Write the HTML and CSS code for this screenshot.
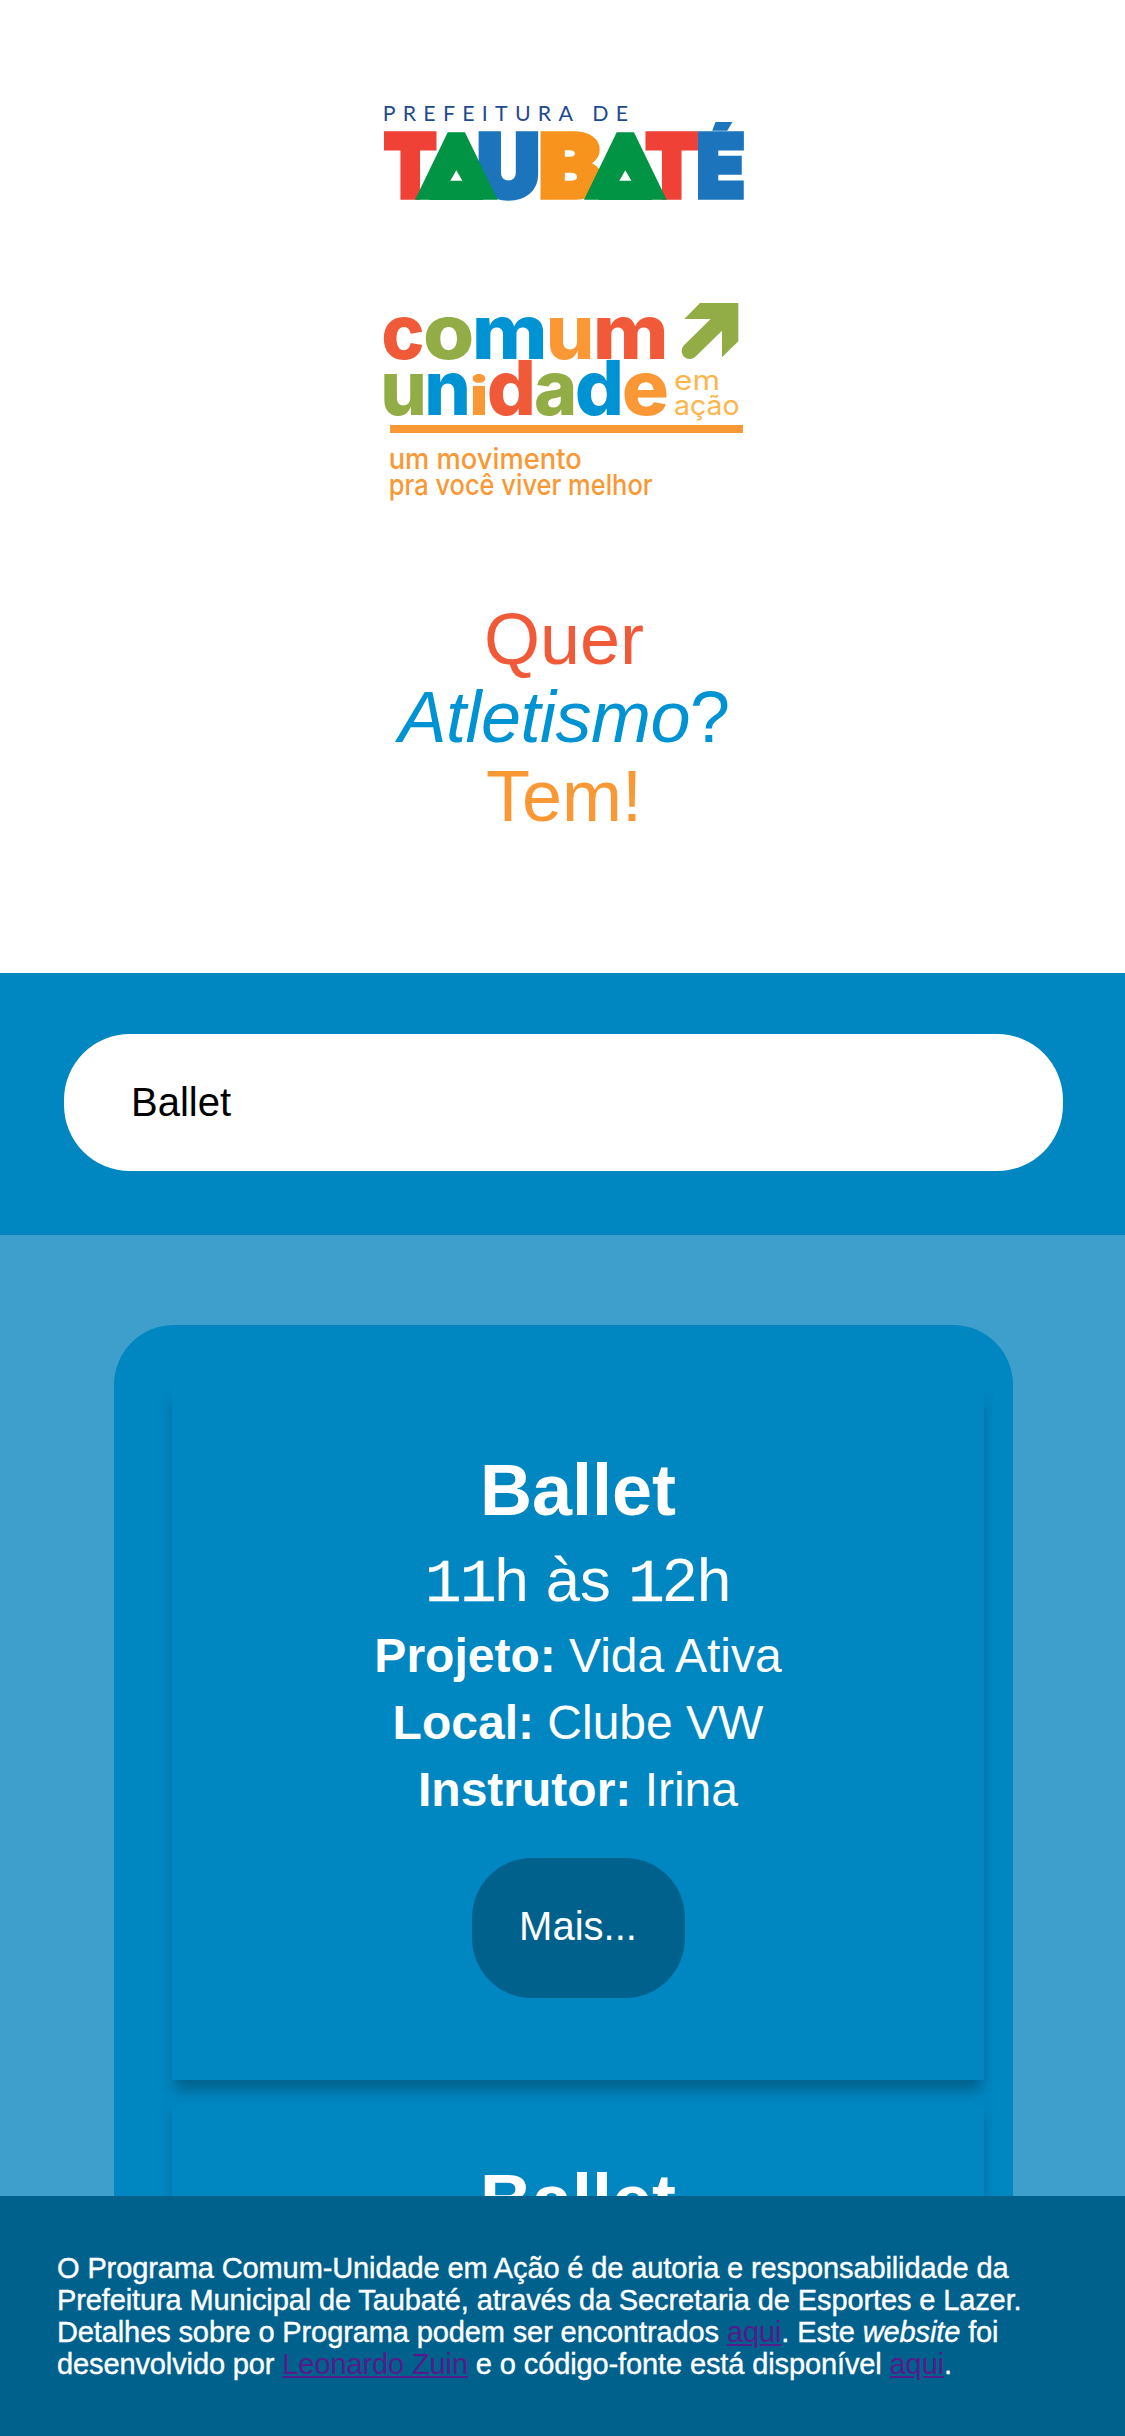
FILE: index.html
```html
<!DOCTYPE html>
<html lang="pt-BR">
<head>
<meta charset="utf-8">
<title>Comum-Unidade em Ação</title>
<link rel="stylesheet" href="styles.css">
</head>
<body>
<header class="hero">
  <svg class="logo-city" viewBox="0 0 1155 390" role="img" aria-label="Prefeitura de Taubaté">
    <clipPath id="accent-trim"><rect x="960" y="96" width="180" height="260"/></clipPath>
    <text class="city-over" x="38" y="94" textLength="736">PREFEITURA DE</text>
    <g class="city-name">
      <text class="red" x="43" y="322" textLength="156" lengthAdjust="spacingAndGlyphs">T</text>
      <text class="blue" x="322" y="322" textLength="187" lengthAdjust="spacingAndGlyphs">U</text>
      <text class="orange" x="507" y="322" textLength="188" lengthAdjust="spacingAndGlyphs">B</text>
      <text class="red" x="827" y="322" textLength="156" lengthAdjust="spacingAndGlyphs">T</text>
      <text class="blue" x="980" y="322" textLength="144" lengthAdjust="spacingAndGlyphs" clip-path="url(#accent-trim)">É</text>
      <text class="green" x="159" y="316" textLength="200" lengthAdjust="spacingAndGlyphs">A</text>
      <path class="plinth" d="M259 170L340 330H178Z"/>
      <path class="hole" d="M259 241L277 272H241Z"/>
      <text class="green" x="666" y="316" textLength="200" lengthAdjust="spacingAndGlyphs">A</text>
      <path class="plinth" d="M766 170L847 330H685Z"/>
      <path class="hole" d="M766 241L784 272H748Z"/>
    </g>
  </svg>
  <svg class="logo-program" viewBox="0 0 1155 660" role="img" aria-label="Comum unidade em ação">
    <g class="program-name">
      <text class="c-red" x="34" y="207" textLength="130" lengthAdjust="spacingAndGlyphs">c</text>
      <text class="c-green" x="159" y="207" textLength="154" lengthAdjust="spacingAndGlyphs">o</text>
      <text class="c-blue" x="305" y="207" textLength="228" lengthAdjust="spacingAndGlyphs">m</text>
      <text class="c-orange" x="527" y="207" textLength="146" lengthAdjust="spacingAndGlyphs">u</text>
      <text class="c-red" x="668" y="207" textLength="228" lengthAdjust="spacingAndGlyphs">m</text>
      <text class="c-green" x="31" y="376" textLength="140" lengthAdjust="spacingAndGlyphs">u</text>
      <text class="c-blue" x="163" y="376" textLength="140" lengthAdjust="spacingAndGlyphs">n</text>
      <text class="c-orange small-i" x="297" y="376" textLength="60" lengthAdjust="spacingAndGlyphs">i</text>
      <text class="c-red" x="350" y="376" textLength="148" lengthAdjust="spacingAndGlyphs">d</text>
      <text class="c-green" x="492" y="376" textLength="130" lengthAdjust="spacingAndGlyphs">a</text>
      <text class="c-blue" x="614" y="376" textLength="148" lengthAdjust="spacingAndGlyphs">d</text>
      <text class="c-orange" x="755" y="376" textLength="142" lengthAdjust="spacingAndGlyphs">e</text>
    </g>
    <path class="arrow" d="M990 39H1105V154L1056 202V122L976 200A24 24 0 0 1 942 166L1022 87H943Z"/>
    <text class="action" x="912" y="299" textLength="138" lengthAdjust="spacingAndGlyphs">em</text>
    <text class="action" x="912" y="375" textLength="197" lengthAdjust="spacingAndGlyphs">ação</text>
    <rect class="rule" x="60" y="405" width="1059" height="24"/>
    <text class="slogan" x="56" y="537" textLength="579" lengthAdjust="spacingAndGlyphs">um movimento</text>
    <text class="slogan" x="56" y="616" textLength="792" lengthAdjust="spacingAndGlyphs">pra você viver melhor</text>
  </svg>
  <h1 class="question">
    <span class="q-red">Quer</span>
    <span class="q-blue"><em>Atletismo</em>?</span>
    <span class="q-orange">Tem!</span>
  </h1>
</header>
<section class="search">
  <input class="search-input" type="text" value="Ballet" aria-label="Modalidade">
</section>
<main class="results">
  <div class="panel">
    <article class="card">
      <h2 class="card-title">Ballet</h2>
      <p class="card-time"><span class="one">11</span>h às <span class="one">1</span>2h</p>
      <p class="card-line"><b>Projeto:</b> Vida Ativa</p>
      <p class="card-line"><b>Local:</b> Clube VW</p>
      <p class="card-line"><b>Instrutor:</b> Irina</p>
      <button class="more" type="button">Mais...</button>
    </article>
    <article class="card">
      <h2 class="card-title">Ballet</h2>
    </article>
  </div>
</main>
<footer class="footer">
  <div>O Programa Comum-Unidade em Ação é de autoria e responsabilidade da</div>
  <div>Prefeitura Municipal de Taubaté, através da Secretaria de Esportes e Lazer.</div>
  <div>Detalhes sobre o Programa podem ser encontrados <a href="#">aqui</a>. Este <em>website</em> foi</div>
  <div>desenvolvido por <a href="#">Leonardo Zuin</a> e o código-fonte está disponível <a href="#">aqui</a>.</div>
</footer>
</body>
</html>
```
FILE: styles.css
```css
* { box-sizing: border-box; }
body {
  margin: 0;
  height: 2436px;
  display: flex;
  flex-direction: column;
  overflow: hidden;
  background: #fff;
  font-family: "Liberation Sans", Arial, sans-serif;
}
h1, h2, p { margin: 0; font-weight: 400; }

.hero {
  height: 973px;
  flex: none;
  padding-top: 90px;
  display: flex;
  flex-direction: column;
  align-items: center;
}
.logo-city { width: 385px; height: 130px; flex: none; }
.logo-program { width: 385px; height: 220px; margin-top: 70px; flex: none; }
.logo-city, .logo-program { overflow: visible; }

.city-over { font: 400 64px Lato, sans-serif; fill: #1f4b8e; }
.city-name { font: 900 261px Inter, sans-serif; stroke-width: 16px; stroke-linejoin: miter; }
.red { fill: #ef4136; stroke: #ef4136; }
.blue { fill: #1c75bc; stroke: #1c75bc; }
.orange { fill: #f7941e; stroke: #f7941e; }
.green {
  font: 400 247px Lato, sans-serif;
  fill: #009444;
  stroke: #009444;
  stroke-width: 28px;
  stroke-miterlimit: 2.3;
}
.plinth { fill: #009444; }
.hole { fill: #fff; }

.program-name { font: 800 227px Inter, sans-serif; }
.program-name .small-i { font-size: 162px; }
.c-red { fill: #f15a38; }
.c-green { fill: #92ad45; }
.c-blue { fill: #0093d3; }
.c-orange { fill: #f99835; }
.arrow { fill: #92ad45; }
.action { font: 400 82px Inter, sans-serif; fill: #fdb54e; }
.rule { fill: #f99835; }
.slogan { font: 500 86px Inter, sans-serif; fill: #f99835; }

.question {
  margin-top: 90px;
  padding-left: 3px;
  display: flex;
  flex-direction: column;
  align-items: center;
  font-size: 72px;
  line-height: 78.4px;
}
.q-red { color: #f15a38; }
.q-blue { color: #0093d3; letter-spacing: -.5px; }
.q-orange { color: #f99835; }

.search {
  height: 262px;
  flex: none;
  padding: 61px 62px 0 64px;
  background: #0086c0;
}
.search-input {
  display: block;
  width: 100%;
  height: 137px;
  padding: 0 67px;
  border: 0;
  border-radius: 66px;
  background: #fff;
  color: #000;
  font: 40px "Liberation Sans", Arial, sans-serif;
}

.results {
  flex: 1;
  min-height: 0;
  overflow: hidden;
  padding: 90px 112px 0 114px;
  background: #3f9fcc;
}
.panel {
  height: 1500px;
  padding: 60px 29px 0 58px;
  border-radius: 60px;
  background: #0086c0;
  display: flex;
  flex-direction: column;
  gap: 15px;
}
.card {
  height: 695px;
  flex: none;
  padding-top: 63px;
  display: flex;
  flex-direction: column;
  align-items: center;
  color: #fff;
  box-shadow: 0 13px 13px -3px #00618c;
}
.card-title { font-size: 72px; line-height: 84px; font-weight: 700; }
.card-time { font-size: 61.5px; line-height: 84px; margin: 6px 0 -5px; }
.one { font-family: "Liberation Mono", monospace; letter-spacing: -2px; -webkit-text-stroke: .3px #fff; }
.card-line { font-size: 48px; line-height: 67px; }
.more {
  width: 213px;
  height: 140px;
  margin-top: 35px;
  padding-bottom: 4px;
  border: 0;
  border-radius: 60px;
  background: #00618c;
  color: #fff;
  font: 40px "Liberation Sans", Arial, sans-serif;
}

.footer {
  height: 240px;
  flex: none;
  padding: 56px 57px 0;
  background: #00618c;
  color: #fff;
  font-size: 29px;
  line-height: 32px;
  letter-spacing: -.115px;
  white-space: nowrap;
  -webkit-text-stroke: .4px #fff;
}
.footer a { color: #551a8b; -webkit-text-stroke: 0; }
```
